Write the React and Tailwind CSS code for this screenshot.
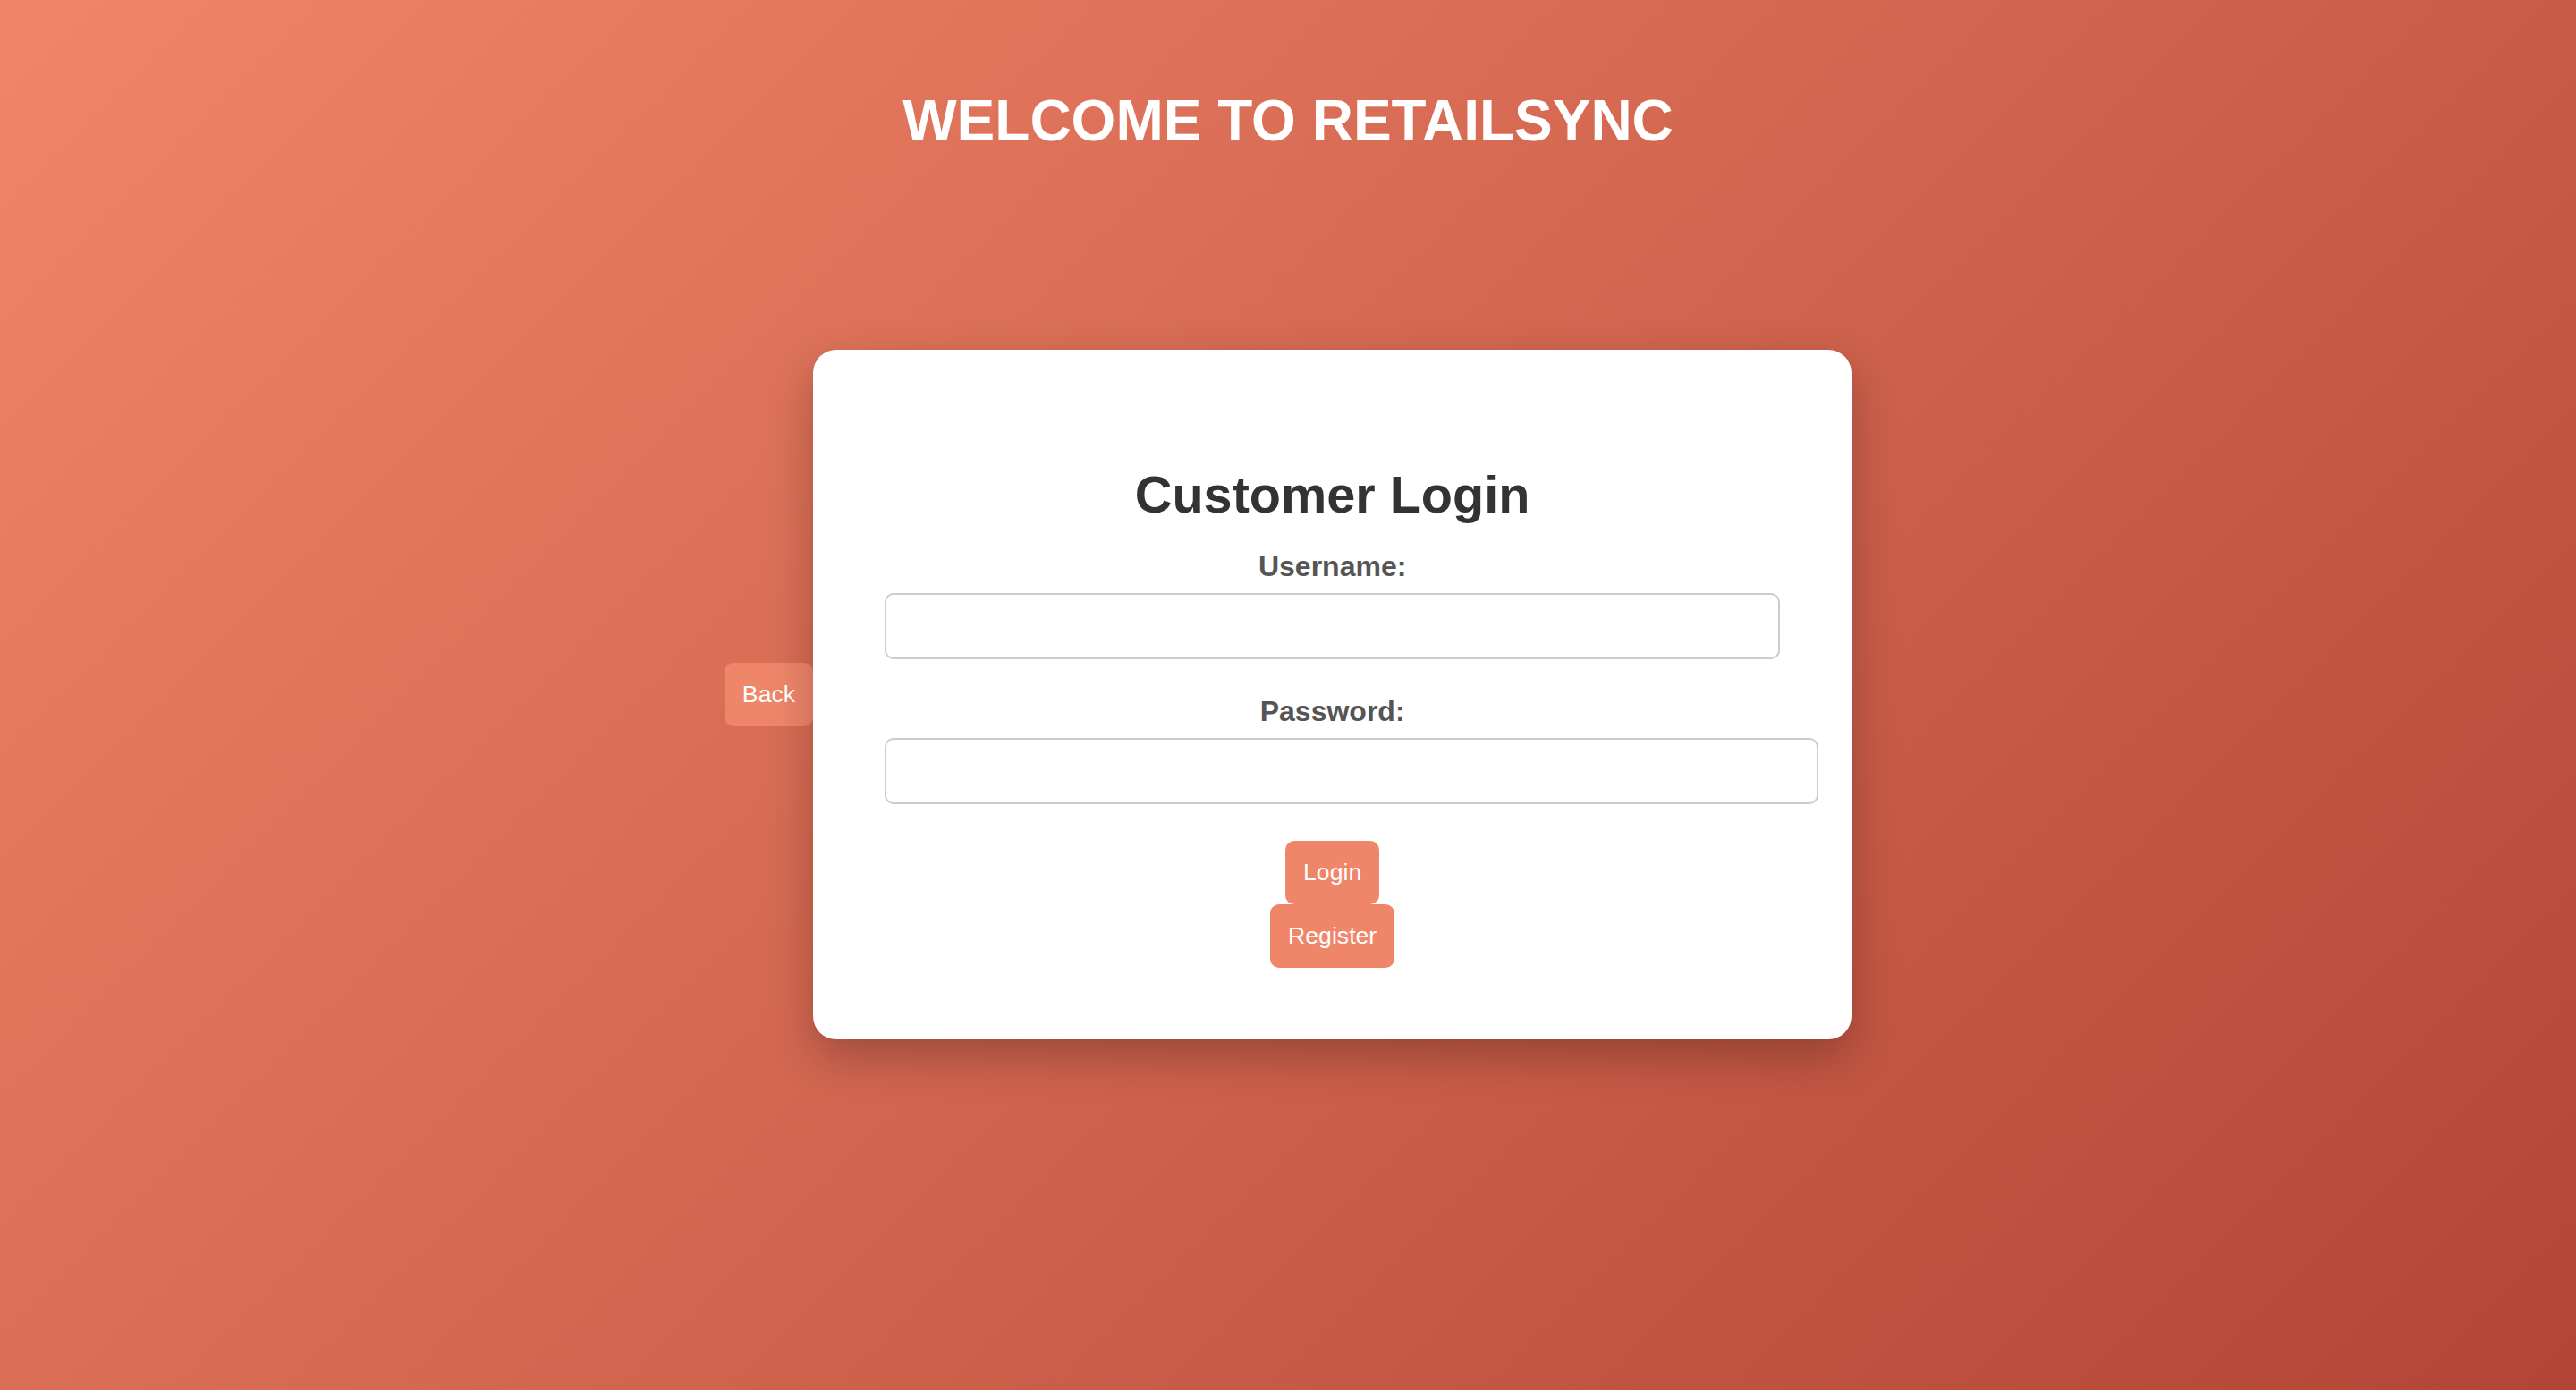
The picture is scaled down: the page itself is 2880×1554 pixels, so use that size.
export default function App() {
  const btn =
    "bg-[#ef866a] text-white text-[26.67px] leading-[31px] px-5 py-5 rounded-[10px] font-['Liberation_Sans',Arial,sans-serif]";
  return (
    <div className="min-h-screen w-full bg-[linear-gradient(135deg,#f08569,#b24535)] font-['Liberation_Sans',Arial,sans-serif] flex flex-col items-center">
      <h1 className="pt-[98px] text-[64px] leading-[74px] font-bold text-white">
        WELCOME TO RETAILSYNC
      </h1>
      <div className="mt-[219px] flex items-center">
        <button className={btn}>Back</button>
        <div className="w-[1161px] bg-white rounded-[26px] p-20 shadow-[0_20px_50px_rgba(0,0,0,0.25)] flex flex-col items-center">
          <h2 className="mt-[49px] text-[57.6px] leading-[66px] font-bold text-[#333]">
            Customer Login
          </h2>
          <label className="mt-[29px] text-[32px] leading-[37px] font-bold text-[#555]">
            Username:
          </label>
          <input
            type="text"
            className="mt-[11px] w-full h-[74px] border-2 border-[#ccc] rounded-[10px] bg-white outline-none px-5"
          />
          <label className="mt-[40px] text-[32px] leading-[37px] font-bold text-[#555]">
            Password:
          </label>
          <input
            type="password"
            className="mt-[11px] self-start w-[1044px] h-[74px] border-2 border-[#ccc] rounded-[10px] bg-white outline-none px-5"
          />
          <button className={`${btn} mt-[41px]`}>Login</button>
          <button className={btn}>Register</button>
        </div>
      </div>
    </div>
  );
}
